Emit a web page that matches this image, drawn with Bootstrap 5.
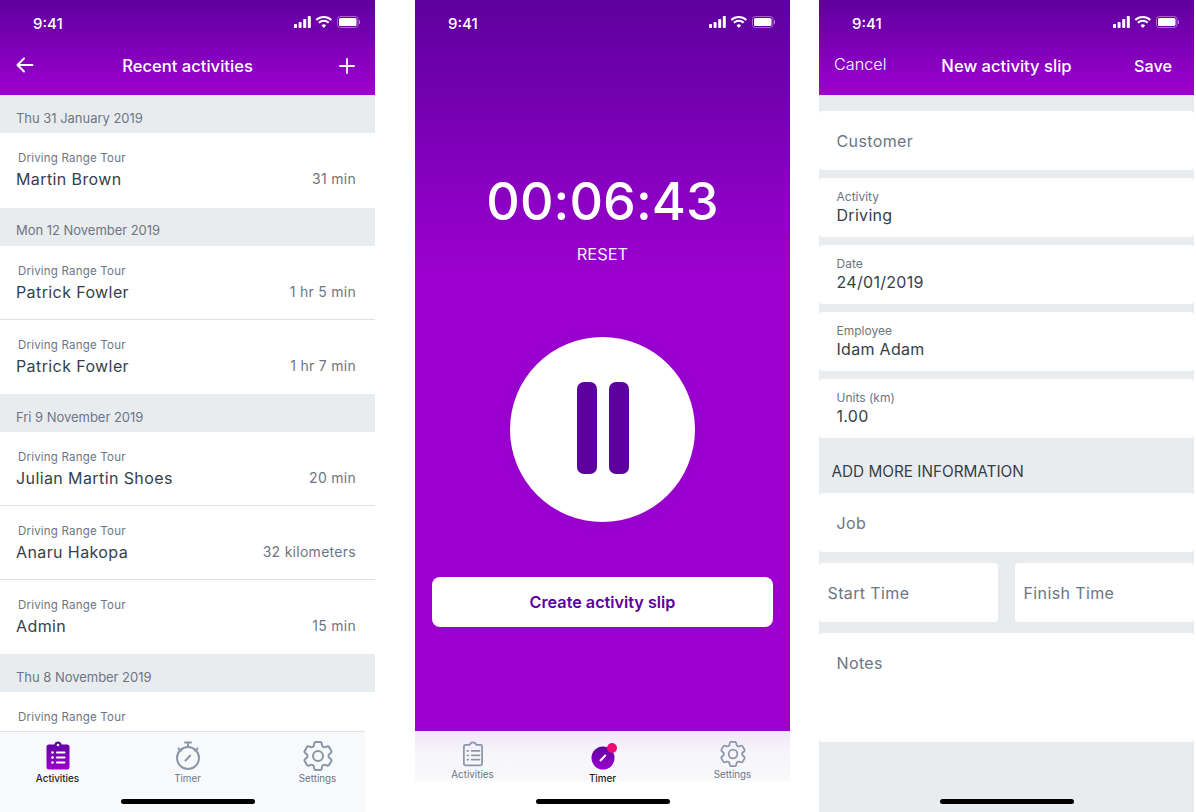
<!DOCTYPE html>
<html lang="en">
<head>
<meta charset="utf-8">
<title>Activity screens</title>
<link rel="stylesheet" href="https://cdn.jsdelivr.net/npm/bootstrap@5.3.0/dist/css/bootstrap.min.css">
<style>
html,body{height:812px;overflow:hidden;background:#fff}
body{font-family:Inter,"Liberation Sans",sans-serif;color:#343f4b;-webkit-font-smoothing:antialiased}
.stage{width:1196px;height:812px}
.phone{width:375px;height:812px;flex:none;overflow:hidden}
.p-gap1{margin-left:40px}
.p-gap2{margin-left:29px}
.appbar{height:95px;flex:none;color:#fff;background:linear-gradient(180deg,#5e009e 0%,#9e00d0 100%)}
.statusbar{height:44px;padding:0 15px 0 33px;font-size:15px;font-weight:500;line-height:47px}
.titlebar{height:44px;padding:0 15px}
.side{width:76px}
.backicon{margin:-2px 0 0 0}
.addicon{margin:-1px 5px 0 0}
.apptitle{font-size:16.6px;font-weight:500}
.canceltxt{font-size:16.2px;font-weight:300;margin-top:-4px}
.savetxt{font-size:16.2px;font-weight:500;padding-right:7px}
.dayhead{height:38px;padding-left:16px;background:#e9ecef;color:#6c7683;font-size:13px;line-height:46px;letter-spacing:-.03px}
.dayhead.next{line-height:44px}
.rowitem{height:74px;padding:18px 19px 0 16px;border-color:#dee2e6}
.rowitem.tall{height:75px}
.rowitem.cut{height:62px;border-bottom:1px solid #dee2e6}
.rowlabel{font-size:11.5px;line-height:14px;color:#6c7683;padding-left:2px;letter-spacing:.2px}
.rowname{font-size:16px;line-height:20px;color:#343f4b;margin-top:4px;letter-spacing:.4px}
.rowtime{font-size:14px;line-height:20px;color:#6c7683;letter-spacing:.28px;margin-top:4px}
.tabs{left:0;right:0;top:731px;height:81px}
.tabs::before{content:"";position:absolute;left:0;top:0;width:365px;bottom:0;background:#f8f9fb;border-top:1px solid #dee2e6}
.tabs.over{height:50px}
.tabs.over::before{width:100%;border-top:0;background:linear-gradient(180deg,#f1e6f8 0%,#f7f5fa 45%,#f8f9fb 100%)}
.tabitem{width:130px;flex:none;padding-top:10px;color:#6c7683;font-size:9.8px;line-height:12px;z-index:1}
.tabitem.on{color:#212529;font-weight:500}
.tabicon{width:30px;height:30px;margin-bottom:2px}
.homebar{left:121px;bottom:8px;width:134px;height:5px;border-radius:3px;background:#000;z-index:2}
.timerpane{height:731px;color:#fff;background:linear-gradient(180deg,#5e009e 0%,#9c00d0 38%,#9c00d0 100%)}
.clock{font-size:52px;font-weight:500;line-height:60px;margin-top:128px;letter-spacing:.1px}
.resetlink{font-size:16.4px;line-height:20px;margin-top:12px;color:#f8eefc}
.pausebtn{width:185px;height:185px;margin:73px auto 0;padding-bottom:4px;box-shadow:0 0 12px rgba(94,0,158,.15)}
.pausebar{width:20px;height:92px;border-radius:7px;background:#5e009e}
.slipbtn{width:341px;height:50px;margin:55px auto 0;font-size:16.2px;font-weight:600;color:#5e009e;border-radius:8px;border:0;padding:0}
.slipbtn:hover{color:#5e009e;background:#fff}
.formpane{background:#e9ecef;height:717px;padding-top:16px}
.formcard{height:59px;margin-bottom:8px;padding:0 17.5px}
.formcard.plain{line-height:60px}
.ph{font-size:16px;color:#6c7683;letter-spacing:.38px}
.flabel{font-size:12px;line-height:14px;color:#6c7683;padding-top:12px}
.fvalue{font-size:16px;line-height:20px;color:#343f4b;margin-top:1px;letter-spacing:.3px}
.formhead{height:55px;margin-top:-8px;padding:24px 0 0 12.500px;font-size:15.3px;line-height:20px;color:#343f4b}
.pair{gap:17px;margin:11px 0}
.pair .formcard{width:179px;padding:0 8.500px;margin:0}
.notescard{height:109px;padding:20px 17.500px 0;line-height:20px}
.jobcard{margin-bottom:0}
</style>
</head>
<body>
<div class="stage d-flex">

<!-- Activities list -->
<section class="phone position-relative bg-white d-flex flex-column">
  <header class="appbar">
    <div class="statusbar d-flex justify-content-between">
      <span>9:41</span>
      <svg width="66" height="12" viewBox="0 0 66 12" class="mt-3" fill="#fff"><rect x="0" y="8" width="3" height="4" rx=".8"/><rect x="4.6" y="6" width="3" height="6" rx=".8"/><rect x="9.2" y="3" width="3" height="9" rx=".8"/><rect x="13.8" y="0" width="3" height="12" rx=".8"/><path d="M29.8 12l-2.3-2.6a3.4 3.4 0 0 1 4.6 0z"/><path d="M25.6 7.5l-1.4-1.5a8.2 8.2 0 0 1 11.2 0L34 7.5a6.2 6.2 0 0 0-8.4 0z"/><path d="M23 4.7l-1.4-1.5a12.2 12.2 0 0 1 16.4 0l-1.4 1.5a10.2 10.2 0 0 0-13.6 0z"/><rect x="43.5" y=".5" width="20.5" height="11" rx="3" fill="none" stroke="#fff" stroke-opacity=".4"/><rect x="45" y="2" width="17.5" height="8" rx="1.6"/><rect x="65" y="4" width="1" height="4" rx=".5" fill-opacity=".5"/></svg>
    </div>
    <div class="titlebar d-flex align-items-center justify-content-between">
      <div class="side"><svg class="d-block backicon" width="20" height="18" viewBox="0 0 20 18" fill="none" stroke="#fff" stroke-width="2" stroke-linecap="round" stroke-linejoin="round"><path d="M2.5 9h15M9 2.5L2.5 9 9 15.5"/></svg></div>
      <div class="apptitle">Recent activities</div>
      <div class="side d-flex justify-content-end"><svg class="d-block addicon" width="16" height="16" viewBox="0 0 16 16" fill="none" stroke="#fff" stroke-width="1.8" stroke-linecap="round"><path d="M8 1v14M1 8h14"/></svg></div>
    </div>
  </header>
  <div class="dayhead">Thu 31 January 2019</div>
  <div class="list-group list-group-flush">
    <div class="list-group-item rowitem tall"><div class="rowlabel">Driving Range Tour</div><div class="d-flex justify-content-between align-items-center"><div class="rowname">Martin Brown</div><div class="rowtime">31 min</div></div></div>
  </div>
  <div class="dayhead next">Mon 12 November 2019</div>
  <div class="list-group list-group-flush">
    <div class="list-group-item rowitem"><div class="rowlabel">Driving Range Tour</div><div class="d-flex justify-content-between align-items-center"><div class="rowname">Patrick Fowler</div><div class="rowtime">1 hr 5 min</div></div></div>
    <div class="list-group-item rowitem"><div class="rowlabel">Driving Range Tour</div><div class="d-flex justify-content-between align-items-center"><div class="rowname">Patrick Fowler</div><div class="rowtime">1 hr 7 min</div></div></div>
  </div>
  <div class="dayhead">Fri 9 November 2019</div>
  <div class="list-group list-group-flush">
    <div class="list-group-item rowitem"><div class="rowlabel">Driving Range Tour</div><div class="d-flex justify-content-between align-items-center"><div class="rowname">Julian Martin Shoes</div><div class="rowtime">20 min</div></div></div>
    <div class="list-group-item rowitem"><div class="rowlabel">Driving Range Tour</div><div class="d-flex justify-content-between align-items-center"><div class="rowname">Anaru Hakopa</div><div class="rowtime">32 kilometers</div></div></div>
    <div class="list-group-item rowitem"><div class="rowlabel">Driving Range Tour</div><div class="d-flex justify-content-between align-items-center"><div class="rowname">Admin</div><div class="rowtime">15 min</div></div></div>
  </div>
  <div class="dayhead">Thu 8 November 2019</div>
  <div class="list-group list-group-flush">
    <div class="list-group-item rowitem cut"><div class="rowlabel">Driving Range Tour</div></div>
  </div>

  <nav class="tabs position-absolute d-flex justify-content-center">
    <div class="tabitem on d-flex flex-column align-items-center">
      <svg class="tabicon" viewBox="0 0 30 30"><defs><linearGradient id="clipfill" x1="0" y1="0" x2="0" y2="1"><stop offset="0" stop-color="#5e009e"/><stop offset="1" stop-color="#9e00d0"/></linearGradient></defs><path fill="url(#clipfill)" d="M6 3.5h5.3C11.8 1.6 13.2.5 15 .5s3.2 1.1 3.7 3H24a2.500 2.500 0 0 1 2.500 2.500v20a2.500 2.500 0 0 1-2.500 2.500H6A2.500 2.500 0 0 1 3.500 26V6A2.500 2.500 0 0 1 6 3.500z"/><circle cx="15" cy="4" r="1.300" fill="#fff"/><g fill="#fff"><circle cx="9.500" cy="11.500" r="1.300"/><circle cx="9.500" cy="16.500" r="1.300"/><circle cx="9.500" cy="21.500" r="1.300"/><rect x="13" y="10.600" width="9.500" height="1.800" rx=".9"/><rect x="13" y="15.600" width="9.500" height="1.800" rx=".9"/><rect x="13" y="20.600" width="9.500" height="1.800" rx=".9"/></g></svg>
      <span>Activities</span>
    </div>
    <div class="tabitem d-flex flex-column align-items-center">
      <svg class="tabicon" viewBox="0 0 30 30" fill="none" stroke="#8a97a8" stroke-width="2" stroke-linecap="round"><circle cx="15" cy="17" r="11"/><path d="M15 1.500V6M12 1.500h6M5.500 7.500l2.500 2.200M24.500 7.500L22 9.700M12.500 19.500l4.700-5"/></svg>
      <span>Timer</span>
    </div>
    <div class="tabitem d-flex flex-column align-items-center">
      <svg class="tabicon" viewBox="2.400 2.400 19.200 19.200" fill="none" stroke="#8a97a8" stroke-width="1.300" stroke-linejoin="round"><path d="M9.594 3.94c.09-.542.56-.94 1.11-.94h2.593c.55 0 1.02.398 1.11.94l.213 1.281c.063.374.313.686.645.87.074.04.147.083.22.127.324.196.72.257 1.075.124l1.217-.456a1.125 1.125 0 011.37.49l1.296 2.247a1.125 1.125 0 01-.26 1.431l-1.003.827c-.293.24-.438.613-.431.992a6.759 6.759 0 010 .255c-.007.378.138.75.43.99l1.005.828c.424.35.534.954.26 1.43l-1.298 2.247a1.125 1.125 0 01-1.369.491l-1.217-.456c-.355-.133-.75-.072-1.076.124a6.57 6.57 0 01-.22.128c-.331.183-.581.495-.644.869l-.213 1.28c-.09.543-.56.941-1.11.941h-2.594c-.55 0-1.02-.398-1.11-.94l-.213-1.281c-.062-.374-.312-.686-.644-.87a6.52 6.52 0 01-.22-.127c-.325-.196-.72-.257-1.076-.124l-1.217.456a1.125 1.125 0 01-1.369-.49l-1.297-2.247a1.125 1.125 0 01.26-1.431l1.004-.827c.292-.24.437-.613.43-.992a6.932 6.932 0 010-.255c.007-.378-.138-.75-.43-.99l-1.004-.828a1.125 1.125 0 01-.26-1.43l1.297-2.247a1.125 1.125 0 011.37-.491l1.216.456c.356.133.751.072 1.076-.124.072-.044.146-.087.22-.128.332-.183.582-.495.644-.869l.214-1.281z"/><circle cx="12" cy="12" r="3.200"/></svg>
      <span>Settings</span>
    </div>
  </nav>
  <div class="homebar position-absolute"></div>
</section>

<!-- Timer -->
<section class="phone p-gap1 position-relative bg-white">
  <main class="timerpane d-flex flex-column">
    <div class="statusbar d-flex justify-content-between">
      <span>9:41</span>
      <svg width="66" height="12" viewBox="0 0 66 12" class="mt-3" fill="#fff"><rect x="0" y="8" width="3" height="4" rx=".8"/><rect x="4.6" y="6" width="3" height="6" rx=".8"/><rect x="9.2" y="3" width="3" height="9" rx=".8"/><rect x="13.8" y="0" width="3" height="12" rx=".8"/><path d="M29.8 12l-2.3-2.6a3.4 3.4 0 0 1 4.6 0z"/><path d="M25.6 7.5l-1.4-1.5a8.2 8.2 0 0 1 11.2 0L34 7.5a6.2 6.2 0 0 0-8.4 0z"/><path d="M23 4.7l-1.4-1.5a12.2 12.2 0 0 1 16.4 0l-1.4 1.5a10.2 10.2 0 0 0-13.6 0z"/><rect x="43.5" y=".5" width="20.5" height="11" rx="3" fill="none" stroke="#fff" stroke-opacity=".4"/><rect x="45" y="2" width="17.5" height="8" rx="1.6"/><rect x="65" y="4" width="1" height="4" rx=".5" fill-opacity=".5"/></svg>
    </div>
    <div class="clock text-center">00:06:43</div>
    <div class="resetlink text-center">RESET</div>
    <div class="pausebtn bg-white rounded-circle d-flex justify-content-center align-items-center gap-2"><span class="pausebar me-1"></span><span class="pausebar"></span></div>
    <button type="button" class="btn btn-light bg-white slipbtn d-block">Create activity slip</button>
  </main>
  <nav class="tabs over position-absolute d-flex justify-content-center">
    <div class="tabitem d-flex flex-column align-items-center">
      <svg class="tabicon" viewBox="0 0 30 30" fill="none" stroke="#8a97a8" stroke-width="2" stroke-linecap="round"><path d="M11.300 4.500H6A2 2 0 0 0 4.500 6.500v20A2 2 0 0 0 6 28h18a2 2 0 0 0 1.500-1.500v-20A2 2 0 0 0 24 4.500h-5.300C18.200 2.600 16.800 1.500 15 1.500s-3.200 1.100-3.700 3z" stroke-linejoin="round"/><path d="M13.500 11.500h9M13.500 16.500h9M13.500 21.500h9M8.500 11.500h1M8.500 16.500h1M8.500 21.500h1"/></svg>
      <span>Activities</span>
    </div>
    <div class="tabitem on d-flex flex-column align-items-center">
      <svg class="tabicon" viewBox="0 0 30 30" overflow="visible"><defs><linearGradient id="dialfill" x1="0" y1="0" x2="0" y2="1"><stop offset="0" stop-color="#5e009e"/><stop offset="1" stop-color="#9e00d0"/></linearGradient></defs><circle cx="15" cy="17" r="11.500" fill="url(#dialfill)"/><path d="M12.500 19.500l4.700-5" stroke="#fff" stroke-width="2" stroke-linecap="round"/><circle cx="24" cy="7" r="5" fill="#ee0a72"/></svg>
      <span>Timer</span>
    </div>
    <div class="tabitem d-flex flex-column align-items-center">
      <svg class="tabicon" viewBox="2.400 2.400 19.200 19.200" fill="none" stroke="#8a97a8" stroke-width="1.300" stroke-linejoin="round"><path d="M9.594 3.94c.09-.542.56-.94 1.11-.94h2.593c.55 0 1.02.398 1.11.94l.213 1.281c.063.374.313.686.645.87.074.04.147.083.22.127.324.196.72.257 1.075.124l1.217-.456a1.125 1.125 0 011.37.49l1.296 2.247a1.125 1.125 0 01-.26 1.431l-1.003.827c-.293.24-.438.613-.431.992a6.759 6.759 0 010 .255c-.007.378.138.75.43.99l1.005.828c.424.35.534.954.26 1.43l-1.298 2.247a1.125 1.125 0 01-1.369.491l-1.217-.456c-.355-.133-.75-.072-1.076.124a6.57 6.57 0 01-.22.128c-.331.183-.581.495-.644.869l-.213 1.28c-.09.543-.56.941-1.11.941h-2.594c-.55 0-1.02-.398-1.11-.94l-.213-1.281c-.062-.374-.312-.686-.644-.87a6.52 6.52 0 01-.22-.127c-.325-.196-.72-.257-1.076-.124l-1.217.456a1.125 1.125 0 01-1.369-.49l-1.297-2.247a1.125 1.125 0 01.26-1.431l1.004-.827c.292-.24.437-.613.43-.992a6.932 6.932 0 010-.255c.007-.378-.138-.75-.43-.99l-1.004-.828a1.125 1.125 0 01-.26-1.43l1.297-2.247a1.125 1.125 0 011.37-.491l1.216.456c.356.133.751.072 1.076-.124.072-.044.146-.087.22-.128.332-.183.582-.495.644-.869l.214-1.281z"/><circle cx="12" cy="12" r="3.200"/></svg>
      <span>Settings</span>
    </div>
  </nav>
  <div class="homebar position-absolute"></div>
</section>

<!-- New slip form -->
<section class="phone p-gap2 position-relative d-flex flex-column">
  <header class="appbar">
    <div class="statusbar d-flex justify-content-between">
      <span>9:41</span>
      <svg width="66" height="12" viewBox="0 0 66 12" class="mt-3" fill="#fff"><rect x="0" y="8" width="3" height="4" rx=".8"/><rect x="4.6" y="6" width="3" height="6" rx=".8"/><rect x="9.2" y="3" width="3" height="9" rx=".8"/><rect x="13.8" y="0" width="3" height="12" rx=".8"/><path d="M29.8 12l-2.3-2.6a3.4 3.4 0 0 1 4.6 0z"/><path d="M25.6 7.5l-1.4-1.5a8.2 8.2 0 0 1 11.2 0L34 7.5a6.2 6.2 0 0 0-8.4 0z"/><path d="M23 4.7l-1.4-1.5a12.2 12.2 0 0 1 16.4 0l-1.4 1.5a10.2 10.2 0 0 0-13.6 0z"/><rect x="43.5" y=".5" width="20.5" height="11" rx="3" fill="none" stroke="#fff" stroke-opacity=".4"/><rect x="45" y="2" width="17.5" height="8" rx="1.6"/><rect x="65" y="4" width="1" height="4" rx=".5" fill-opacity=".5"/></svg>
    </div>
    <div class="titlebar d-flex align-items-center justify-content-between">
      <div class="side canceltxt">Cancel</div>
      <div class="apptitle">New activity slip</div>
      <div class="side savetxt text-end">Save</div>
    </div>
  </header>
  <div class="formpane">
    <div class="formcard plain bg-white rounded-1"><span class="ph">Customer</span></div>
    <div class="formcard bg-white rounded-1"><div class="flabel">Activity</div><div class="fvalue">Driving</div></div>
    <div class="formcard bg-white rounded-1"><div class="flabel">Date</div><div class="fvalue">24/01/2019</div></div>
    <div class="formcard bg-white rounded-1"><div class="flabel">Employee</div><div class="fvalue">Idam Adam</div></div>
    <div class="formcard bg-white rounded-1"><div class="flabel">Units (km)</div><div class="fvalue">1.00</div></div>
    <div class="formhead">ADD MORE INFORMATION</div>
    <div class="formcard plain jobcard bg-white rounded-1"><span class="ph">Job</span></div>
    <div class="pair d-flex">
      <div class="formcard plain bg-white rounded-1"><span class="ph">Start Time</span></div>
      <div class="formcard plain bg-white rounded-1"><span class="ph">Finish Time</span></div>
    </div>
    <div class="notescard bg-white rounded-1"><span class="ph">Notes</span></div>
  </div>
  <div class="homebar position-absolute"></div>
</section>

</div>
</body>
</html>
